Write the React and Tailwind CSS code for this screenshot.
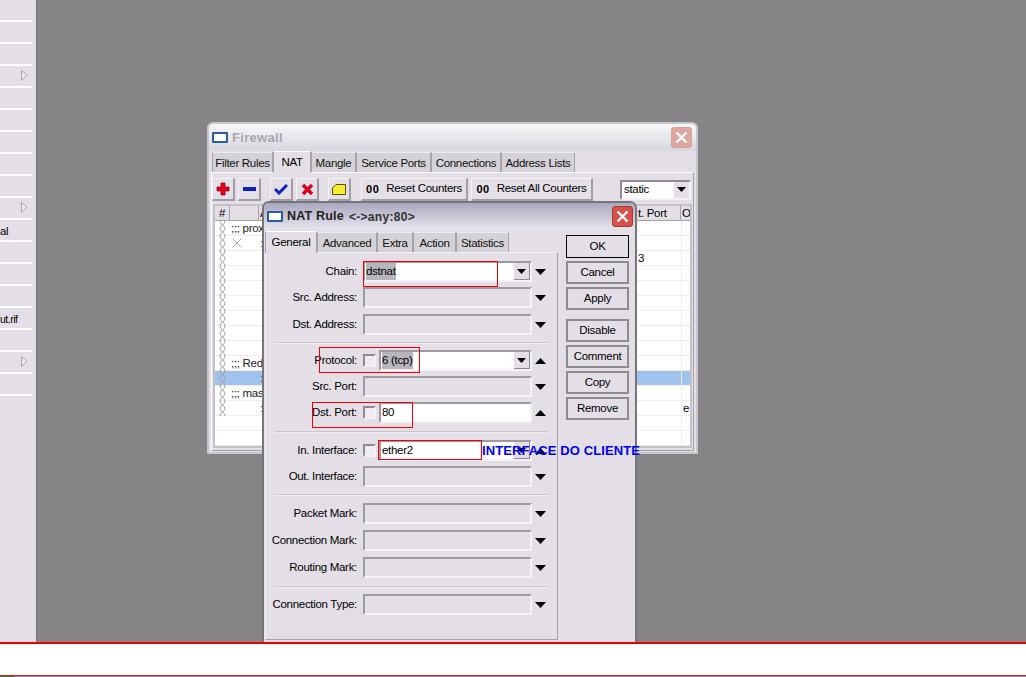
const tahoma = { fontFamily: '"Liberation Sans", Arial, sans-serif' };

function Triangle({ up }) {
  return (
    <svg width="11" height="6" viewBox="0 0 11 6" className="shrink-0">
      <path d={up ? "M5.5 0L11 6H0z" : "M0 0H11L5.5 6z"} fill="#000" />
    </svg>
  );
}

function SideRow({ text, arrow, textClass }) {
  return (
    <div className="relative h-[22px] w-[32px] shrink-0 border-b-2 border-white leading-[20px] text-black">
      {text && <span className={"absolute left-0 top-[1px] whitespace-nowrap " + textClass}>{text}</span>}
      {arrow && (
        <svg width="7" height="11" viewBox="0 0 7 11" className="absolute left-[21px] top-[4px]">
          <path d="M0.5 0.5V10.5L6 5z" fill="#eeeaf0" stroke="#a9a7ad" />
        </svg>
      )}
    </div>
  );
}

function Sidebar() {
  const rows = [
    {}, {}, {}, { arrow: true }, {}, {}, {}, {}, {},
    { arrow: true },
    { text: "al", textClass: "text-[11.5px]" },
    {}, {}, {},
    { text: "ut.rif", textClass: "text-[10.5px] tracking-[-0.5px]" },
    {},
    { arrow: true },
    {},
  ];
  return (
    <div className="h-full w-[36px] shrink-0 overflow-hidden bg-[#e4dfe7]">
      {rows.map((r, i) => (
        <SideRow key={i} text={r.text} arrow={r.arrow} textClass={r.textClass} />
      ))}
    </div>
  );
}

function WinIcon() {
  return <div className="h-[11px] w-[16px] shrink-0 rounded-[1px] border-2 border-[#2b5c9e] bg-white" />;
}

function CloseBtn({ active }) {
  return (
    <div
      className={
        active
          ? "flex h-[21px] w-[21px] shrink-0 items-center justify-center rounded-[3px] border border-[#a33b35] bg-[#d9504a]"
          : "flex h-[21px] w-[21px] shrink-0 items-center justify-center rounded-[3px] border border-[#cfa3a0] bg-[#dfa59f]"
      }
    >
      <svg width="13" height="13" viewBox="0 0 13 13">
        <path d="M1.5 1.5L11.5 11.5M11.5 1.5L1.5 11.5" stroke="#fff" strokeWidth="2.4" />
      </svg>
    </div>
  );
}

function Tab({ label, active, w }) {
  return (
    <div
      className={
        active
          ? "z-10 -mb-[1px] flex h-[22px] shrink-0 items-center justify-center whitespace-nowrap border-x border-t border-[#a5a3a8] border-t-white bg-[#e4dfe7] text-[11.5px] text-black " + w
          : "flex h-[20px] shrink-0 items-center justify-center whitespace-nowrap border-x border-t border-[#a5a3a8] border-t-[#eeeaf0] bg-[#d5d2d7] pt-[2px] text-[11.5px] text-[#111] " + w
      }
    >
      {label}
    </div>
  );
}

function ToolBtn({ children, w }) {
  return (
    <div className={"flex h-[23px] shrink-0 items-center justify-center whitespace-nowrap border border-b-2 border-r-2 border-[#a09ea4] border-l-[#f4f2f6] border-t-[#f4f2f6] bg-[#e4dfe7] text-[11.5px] text-black " + w}>
      {children}
    </div>
  );
}

function Counter({ label, w }) {
  return (
    <ToolBtn w={w}>
      <span className="mr-[7px] text-[11px] font-bold tracking-[0.5px]">00</span>
      {label}
    </ToolBtn>
  );
}

function TableRow({ text, flag, colon, selected, third, last, chain }) {
  return (
    <div className={"flex h-[15px] shrink-0 border-b border-[#efece9] text-[11.5px] leading-[14px] " + (selected ? "bg-[#a0c3ee]" : "bg-white")}>
      <div className="flex w-[15px] shrink-0 justify-center">
        {chain && (
          <svg width="7" height="15" viewBox="0 0 7 15">
            <path d="M1 0C1 4 6 4 6 7.5S1 11 1 15M6 0C6 4 1 4 1 7.5S6 11 6 15" fill="none" stroke="#a4a09a" />
          </svg>
        )}
      </div>
      {text ? (
        <div className="flex-1 whitespace-nowrap pl-[1px] text-[#222]">{text}</div>
      ) : (
        <>
          <div className="flex w-[29px] shrink-0 items-center pl-[2px]">
            {flag && (
              <svg width="10" height="10" viewBox="0 0 10 10">
                <path d="M0.5 0.5L9.5 9.5M9.5 0.5L0.5 9.5" stroke="#a8a8a8" />
              </svg>
            )}
          </div>
          <div className="flex-1 pl-[1px] text-[#2a50b0]">{colon}</div>
        </>
      )}
      <div className="w-[46px] shrink-0 pl-[3px]">{third}</div>
      <div className="w-[9px] shrink-0 border-l border-[#efece9] pl-[1px]">{last}</div>
    </div>
  );
}

function FirewallWindow() {
  const rows = [
    { text: ";;; prox", chain: true },
    { flag: true, colon: ":", chain: true },
    { third: "3", chain: true },
    { chain: true }, { chain: true }, { chain: true }, { chain: true }, { chain: true }, { chain: true },
    { text: ";;; Red", chain: true },
    { selected: true, colon: ":", chain: true },
    { text: ";;; mas", chain: true },
    { colon: ":", last: "e", chain: true },
    {}, {}, {},
  ];
  return (
    <div className="absolute left-[170px] top-[122px] flex h-[332px] w-[491px] flex-col rounded-t-[6px] border-2 border-[#c8c6cc] bg-[#e4dfe7]">
      <div className="flex h-[27px] shrink-0 items-center rounded-t-[5px] bg-gradient-to-b from-[#f8f8fa] to-[#d8d6de] pl-[3px] pr-[4px]">
        <WinIcon />
        <span className="ml-[4px] flex-1 text-[13px] font-bold tracking-[0.3px] text-[#a8a8ac]">Firewall</span>
        <CloseBtn />
      </div>
      <div className="mt-[1px] flex h-[20px] shrink-0 items-end pl-[3px]">
        <Tab label="Filter Rules" w="w-[61px]" />
        <Tab label="NAT" active w="w-[38px]" />
        <Tab label="Mangle" w="w-[45px]" />
        <Tab label="Service Ports" w="w-[75px]" />
        <Tab label="Connections" w="w-[70px]" />
        <Tab label="Address Lists" w="w-[74px]" />
      </div>
      <div className="mx-[2px] mb-[1px] flex min-h-0 flex-1 flex-col border border-[#a5a3a8] border-l-white border-t-white pt-[5px]">
        <div className="flex h-[23px] shrink-0 items-center">
          <ToolBtn w="w-[23px]">
            <svg width="14" height="14" viewBox="0 0 14 14">
              <path d="M5 1H9V5H13V9H9V13H5V9H1V5H5z" fill="#e8001c" stroke="#7a0010" strokeWidth="0.7" />
            </svg>
          </ToolBtn>
          <div className="ml-[3px]">
            <ToolBtn w="w-[23px]">
              <div className="h-[4px] w-[13px] bg-[#1020c0]" />
            </ToolBtn>
          </div>
          <div className="ml-[9px]">
            <ToolBtn w="w-[23px]">
              <svg width="14" height="12" viewBox="0 0 14 12">
                <path d="M1 6L5 10L13 2" fill="none" stroke="#1020c0" strokeWidth="3" />
              </svg>
            </ToolBtn>
          </div>
          <div className="ml-[3px]">
            <ToolBtn w="w-[23px]">
              <svg width="13" height="13" viewBox="0 0 13 13">
                <path d="M2 2L11 11M11 2L2 11" stroke="#d8001c" strokeWidth="3.4" />
              </svg>
            </ToolBtn>
          </div>
          <div className="ml-[9px]">
            <ToolBtn w="w-[23px]">
              <svg width="14" height="11" viewBox="0 0 14 11">
                <path d="M0.5 4L4 0.5H13.5V10.5H0.5z" fill="#f6ee2c" stroke="#55500a" />
              </svg>
            </ToolBtn>
          </div>
          <div className="ml-[10px]">
            <Counter label="Reset Counters" w="w-[107px]" />
          </div>
          <div className="ml-[3px]">
            <Counter label="Reset All Counters" w="w-[122px]" />
          </div>
          <div className="ml-[27px] flex h-[20px] w-[71px] shrink-0 items-center border-2 border-[#8d8b90] border-b-[#f4f2f6] border-r-[#f4f2f6] bg-white pl-[2px] text-[11.5px]">
            <span className="flex-1">static</span>
            <div className="flex h-[16px] w-[15px] items-center justify-center bg-[#e4dfe7]">
              <svg width="9" height="5" viewBox="0 0 9 5"><path d="M0 0H9L4.5 5z" fill="#000" /></svg>
            </div>
          </div>
        </div>
        <div className="mb-[2px] ml-[1px] mr-[1px] mt-[3px] flex min-h-0 flex-1 flex-col overflow-hidden border-2 border-[#c4c2c8] bg-white">
          <div className="flex h-[15px] shrink-0 border-b border-[#a5a3a8] bg-[#e4dfe7] text-[11.5px] leading-[14px]">
            <div className="w-[15px] shrink-0 border-r border-[#a5a3a8] text-center">#</div>
            <div className="w-[29px] shrink-0 border-r border-[#a5a3a8]" />
            <div className="flex-1 pl-[1px]">A</div>
            <div className="w-[46px] shrink-0 whitespace-nowrap border-r border-[#a5a3a8] pl-[3px]">t. Port</div>
            <div className="w-[9px] shrink-0 pl-[1px]">O</div>
          </div>
          {rows.map((r, i) => (
            <TableRow key={i} {...r} />
          ))}
        </div>
      </div>
    </div>
  );
}

function Field({ label, mt, check, value, enabled, combo, up, selected }) {
  return (
    <div className={"flex h-[21px] shrink-0 items-center " + mt}>
      <div className="w-[91px] shrink-0 whitespace-nowrap text-right text-[11.5px] text-black">{label}</div>
      <div className="ml-[6px] flex w-[169px] shrink-0 items-center">
        {check && (
          <div className="mr-[3px] h-[13px] w-[13px] shrink-0 border-2 border-[#8d8b90] border-b-[#f4f2f6] border-r-[#f4f2f6] bg-[#f0edf2]" />
        )}
        <div
          className={
            "flex h-[21px] min-w-0 flex-1 items-center border-2 border-[#9c9aa0] border-b-[#f4f2f6] border-r-[#f4f2f6] pl-[1px] text-[11.5px] " +
            (enabled ? "bg-white" : "bg-[#e4dfe7]")
          }
        >
          <span className={"flex-none " + (selected ? "bg-[#b8b6bc]" : "")}>{value}</span>
          {combo && (
            <div className="ml-auto flex h-[17px] w-[16px] items-center justify-center border-b border-r border-[#8d8b90] bg-[#e4dfe7]">
              <svg width="9" height="5" viewBox="0 0 9 5"><path d="M0 0H9L4.5 5z" fill="#000" /></svg>
            </div>
          )}
        </div>
      </div>
      <div className="ml-[3px] flex w-[11px] justify-center">
        <Triangle up={up} />
      </div>
    </div>
  );
}

function Separator({ mt }) {
  return <div className={"mx-[9px] h-[2px] shrink-0 border-t border-[#c9c7cd] bg-[#f0edf2] " + mt} />;
}

function SideBtn({ label, mt, primary }) {
  return (
    <div
      className={
        "flex h-[23px] w-[63px] shrink-0 items-center justify-center bg-[#e4dfe7] text-[11.5px] text-black " +
        (primary ? "border border-black " : "border-2 border-[#8d8b90] ") +
        mt
      }
    >
      {label}
    </div>
  );
}

function NatWindow() {
  return (
    <div className="absolute left-[225px] top-[201px] flex h-[445px] w-[375px] flex-col rounded-t-[7px] border-2 border-[#77757c] bg-[#e4dfe7] pb-[4px]">
      <div className="flex h-[26px] shrink-0 items-center rounded-t-[5px] bg-gradient-to-b from-[#a9a7bd] to-[#e6e5ed] pl-[3px] pr-[2px] pt-[1px]">
        <WinIcon />
        <span className="ml-[4px] text-[12.5px] font-bold tracking-[0.2px] text-[#222]">NAT Rule</span>
        <span className="ml-[5px] flex-1 text-[12px] font-bold tracking-[0.3px] text-[#333]">&lt;-&gt;any:80&gt;</span>
        <CloseBtn active />
      </div>
      <div className="flex min-h-0 flex-1 pl-[1px] pt-[3px]">
        <div className="flex w-[293px] shrink-0 flex-col">
          <div className="flex h-[20px] shrink-0 items-end">
            <Tab label="General" active w="w-[52px]" />
            <Tab label="Advanced" w="w-[60px]" />
            <Tab label="Extra" w="w-[36px]" />
            <Tab label="Action" w="w-[43px]" />
            <Tab label="Statistics" w="w-[53px]" />
          </div>
          <div className="flex min-h-0 flex-1 flex-col border border-[#a5a3a8] border-l-[#f4f2f6] border-t-[#f4f2f6]">
            <Field label="Chain:" mt="mt-[8px]" value="dstnat" enabled combo selected />
            <Field label="Src. Address:" mt="mt-[5px]" />
            <Field label="Dst. Address:" mt="mt-[6px]" />
            <Separator mt="mt-[7px]" />
            <Field label="Protocol:" mt="mt-[6px]" check value="6 (tcp)" enabled combo up selected />
            <Field label="Src. Port:" mt="mt-[5px]" />
            <Field label="Dst. Port:" mt="mt-[5px]" check value="80" enabled up />
            <Separator mt="mt-[8px]" />
            <Field label="In. Interface:" mt="mt-[7px]" check value="ether2" enabled combo up />
            <Field label="Out. Interface:" mt="mt-[5px]" />
            <Separator mt="mt-[7px]" />
            <Field label="Packet Mark:" mt="mt-[7px]" />
            <Field label="Connection Mark:" mt="mt-[6px]" />
            <Field label="Routing Mark:" mt="mt-[6px]" />
            <Separator mt="mt-[8px]" />
            <Field label="Connection Type:" mt="mt-[6px]" />
          </div>
        </div>
        <div className="ml-[8px] flex flex-col">
          <SideBtn label="OK" mt="mt-[3px]" primary />
          <SideBtn label="Cancel" mt="mt-[3px]" />
          <SideBtn label="Apply" mt="mt-[3px]" />
          <SideBtn label="Disable" mt="mt-[9px]" />
          <SideBtn label="Comment" mt="mt-[3px]" />
          <SideBtn label="Copy" mt="mt-[3px]" />
          <SideBtn label="Remove" mt="mt-[3px]" />
        </div>
      </div>
    </div>
  );
}

export default function App() {
  return (
    <div className="flex h-screen w-full flex-col overflow-hidden bg-white tracking-[-0.3px]" style={tahoma}>
      <div className="flex h-[642px] shrink-0">
        <Sidebar />
        <div className="relative flex-1 overflow-hidden border-l border-[#77757c] bg-[#868487]">
          <FirewallWindow />
          <NatWindow />
          {/* red marks drawn over the screenshot */}
          <div className="absolute left-[326px] top-[261px] h-[26px] w-[135px] border border-[#f00000]" />
          <div className="absolute left-[282px] top-[347px] h-[26px] w-[101px] border border-[#f00000]" />
          <div className="absolute left-[275px] top-[402px] h-[26px] w-[101px] border border-[#f00000]" />
          <div className="absolute left-[341px] top-[440px] h-[20px] w-[104px] border border-[#f00000]" />
          <div className="absolute left-[445px] top-[443px] whitespace-nowrap text-[13px] font-bold leading-[16px] tracking-[0.1px] text-[#0000f0]">
            INTERFACE DO CLIENTE
          </div>
        </div>
      </div>
      <div className="h-[2px] shrink-0 bg-[#f00000]" />
      <div className="flex-1 bg-white" />
      <div className="h-[1px] shrink-0 bg-[#e02020]" />
      <div className="flex h-[1px] shrink-0 bg-[#8f88b0]">
        <div className="h-full w-[14px] bg-[#2f7a2f]" />
      </div>
    </div>
  );
}
